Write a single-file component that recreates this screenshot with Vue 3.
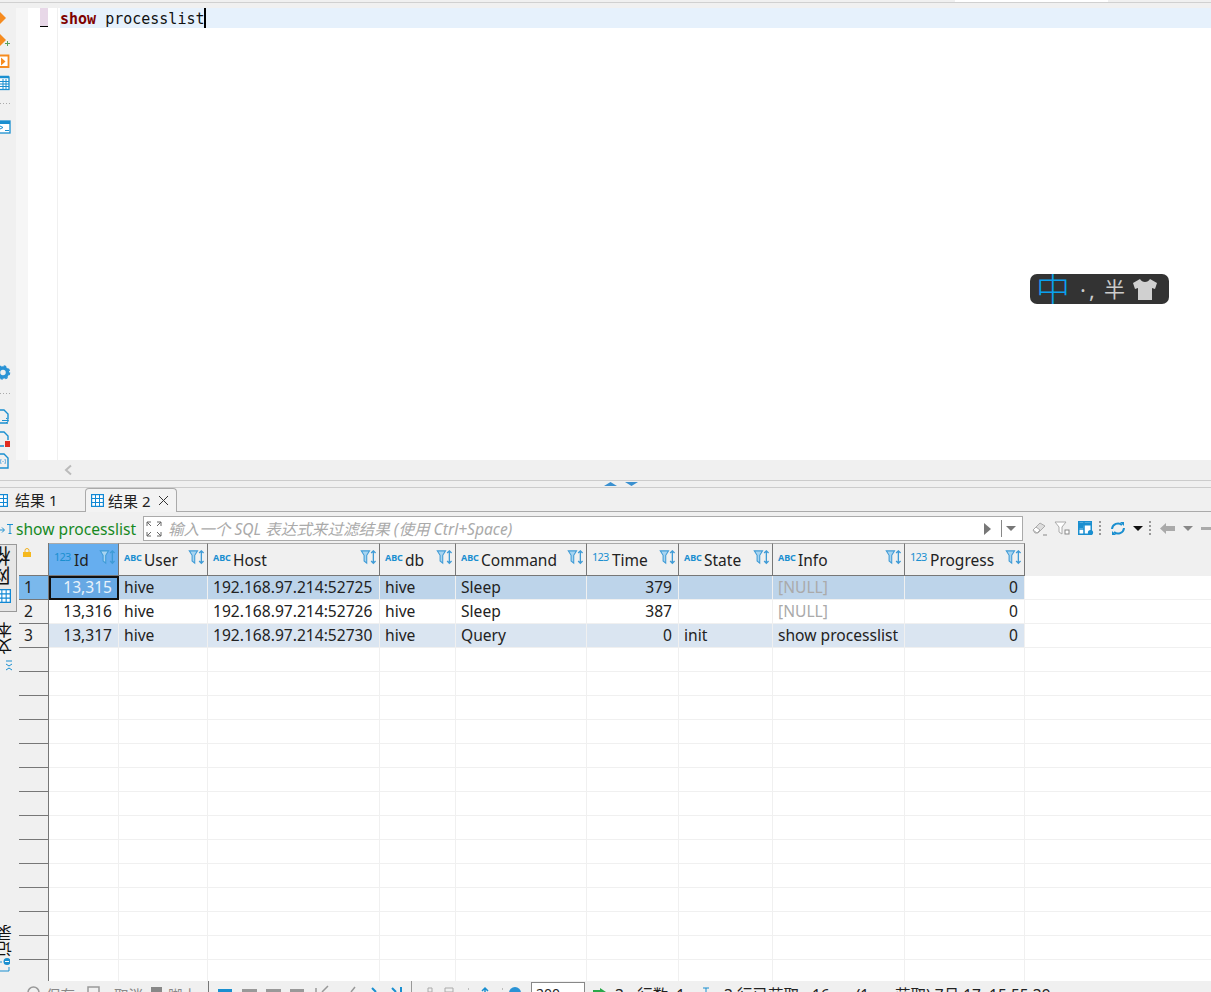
<script setup>
const columns = [
  { name: 'Id', type: '123', width: 70, right: true, selected: true },
  { name: 'User', type: 'ABC', width: 89 },
  { name: 'Host', type: 'ABC', width: 172 },
  { name: 'db', type: 'ABC', width: 76 },
  { name: 'Command', type: 'ABC', width: 131 },
  { name: 'Time', type: '123', width: 92, right: true },
  { name: 'State', type: 'ABC', width: 94 },
  { name: 'Info', type: 'ABC', width: 132 },
  { name: 'Progress', type: '123', width: 120, right: true },
]
const data = [
  ['13,315', 'hive', '192.168.97.214:52725', 'hive', 'Sleep', '379', '', '[NULL]', '0'],
  ['13,316', 'hive', '192.168.97.214:52726', 'hive', 'Sleep', '387', '', '[NULL]', '0'],
  ['13,317', 'hive', '192.168.97.214:52730', 'hive', 'Query', '0', 'init', 'show processlist', '0'],
]
const rows = Array.from({ length: 17 }, (_, i) => data[i] || Array(9).fill(''))
</script>

<template>
  <div class="app">
    <div class="topstrip"><div class="toptab"></div></div>

    <div class="editor-row">
      <svg class="rail-svg" width="16" height="477" viewBox="0 3 16 477">
        <polygon points="-1,11 6,18 -1,25" fill="#f68b1f" />
        <polygon points="-1,33 6,40 -1,47" fill="#f68b1f" />
        <path d="M5 43.500h5M7.500 41v5" stroke="#5aa05a" stroke-width="1" />
        <path d="M-2 55.500h10.500v11.500h-10.500" fill="#fff" stroke="#f68b1f" stroke-width="1.800" />
        <polygon points="1,57.500 5.500,61.500 1,65.500" fill="#f68b1f" />
        <rect x="-2" y="77" width="11" height="12.500" fill="#fff" stroke="#1a8fd0" stroke-width="1.300" />
        <path d="M-2 77h11" stroke="#1a8fd0" stroke-width="2.500" />
        <path d="M-2 81.500h11M-2 84h11M-2 86.500h11M3 79v10M6 79v10" stroke="#1a8fd0" />
        <path d="M0 103.500h1M3 103.500h1M6 103.500h1M9 103.500h1" stroke="#aaa" />
        <rect x="-2" y="121" width="12" height="12" fill="#fff" stroke="#1a8fd0" stroke-width="1.300" />
        <path d="M-2 122.500h12" stroke="#1a8fd0" stroke-width="3" />
        <path d="M0 126l3 1.500-3 1.500M5 130.500h4" stroke="#1a8fd0" fill="none" />
        <circle cx="3" cy="372.500" r="4.500" fill="none" stroke="#2a93d5" stroke-width="3.500" />
        <circle cx="3" cy="372.500" r="6.500" fill="none" stroke="#2a93d5" stroke-width="1.500" stroke-dasharray="2.500 2.600" />
        <path d="M0 393.500h1M3 393.500h1M6 393.500h1M9 393.500h1" stroke="#aaa" />
        <path d="M-2 410h6l4 4v5M-2 423h10" fill="none" stroke="#1a8fd0" stroke-width="1.400" />
        <path d="M2 420.500h6M6 418l3 2.500-3 2.500" fill="none" stroke="#1a8fd0" />
        <path d="M-2 432h6l4 4v4M-2 446h6" fill="none" stroke="#1a8fd0" stroke-width="1.400" />
        <rect x="5" y="441" width="5" height="6" fill="#e02b20" />
        <path d="M-2 454h6l4 4v10h-10" fill="none" stroke="#1a8fd0" stroke-width="1.400" />
        <path d="M1 459q-1 2.500 0 5M5 459q1 2.500 0 5M3 461v1" stroke="#5aa8dc" fill="none" />
      </svg>
      <div class="editor-wrap">
        <div class="editor-gap"></div>
        <div class="editor">
          <div class="ruler"></div>
          <div class="gutter"><div class="mark"></div></div>
          <div class="code">
            <div class="line"><b class="kw">show</b> processlist<span class="caret"></span></div>
          </div>
        </div>
        <div class="hscroll">
          <svg class="hs-left" width="10" height="12" viewBox="0 0 10 12"><path d="M8 1.500L3 6l5 4.500" fill="none" stroke="#bbb" stroke-width="2" /></svg>
        </div>
      </div>
    </div>

    <div class="splitter">
      <svg width="36" height="6" viewBox="0 0 36 6">
        <polygon points="0,5 6.500,1 13,5" fill="#3a90d0" />
        <polygon points="21,1 34,1 27.500,5" fill="#3a90d0" />
      </svg>
    </div>

    <div class="tabs">
      <div class="tab first">
        <svg class="tab-ic clip" width="13" height="13" viewBox="0 0 13 13"><use href="#tbl" /></svg>
        <span>结果 1</span>
      </div>
      <div class="tab active">
        <svg class="tab-ic" width="13" height="13" viewBox="0 0 13 13"><use href="#tbl" /></svg>
        <span>结果 2</span>
        <svg class="close" width="11" height="11" viewBox="0 0 11 11"><path d="M1 1l9 9M10 1l-9 9" stroke="#333" /></svg>
      </div>
      <div class="tab-rest"></div>
    </div>

    <div class="filter">
      <svg class="sql-ic" width="16" height="12" viewBox="0 0 16 12"><path d="M-1 7h5M2 4.500L4.500 7 2 9.500" stroke="#1a8fd0" fill="none" /><path d="M7 1.500h6M10 1.500v9M8.500 10.500h3" stroke="#1a8fd0" fill="none" /></svg>
      <span class="sql">show processlist</span>
      <div class="input">
        <svg class="expand" width="16" height="16" viewBox="0 0 16 16"><path d="M1 5V1h4M11 1h4v4M15 11v4h-4M5 15H1v-4M1 1l4 4M15 1l-4 4M15 15l-4-4M1 15l4-4" fill="none" stroke="#666" /></svg>
        <span class="ph">输入一个 SQL 表达式来过滤结果 (使用 Ctrl+Space)</span>
        <svg class="play" width="8" height="12" viewBox="0 0 8 12"><polygon points="0,0 7,6 0,12" fill="#777" /></svg>
        <div class="vsep"></div>
        <svg class="drop" width="10" height="6" viewBox="0 0 10 6"><polygon points="0,0 10,0 5,5" fill="#777" /></svg>
      </div>
      <div class="tools">
        <svg width="16" height="15" viewBox="0 0 16 15"><path d="M1 9l7-7 5 3-7 7H3z" fill="#ddd" stroke="#aaa" /><path d="M1 9l4 3 3-3-4-3z" fill="#fff" stroke="#aaa" /><path d="M11 14h4" stroke="#888" /></svg>
        <svg class="t-filter" width="16" height="15" viewBox="0 0 16 15"><path d="M1 1h11L8 6v7L5 11V6z" fill="#fff" stroke="#aaa" /><rect x="11" y="9" width="4" height="4" fill="#fff" stroke="#888" /></svg>
        <svg class="t-table" width="16" height="15" viewBox="0 0 16 15"><rect x="0.750" y="0.750" width="12.500" height="12.500" fill="#fff" stroke="#1a8fd0" stroke-width="1.500" /><path d="M0 3h14" stroke="#1a8fd0" stroke-width="3" /><path d="M0 8h6M6 0v14" stroke="#1a8fd0" stroke-width="1.500" /><rect x="1" y="4" width="4.500" height="3" fill="#1a8fd0" /><circle cx="12.500" cy="11.500" r="2.600" fill="#1a8fd0" /></svg>
        <i class="dots"></i>
        <svg class="t-sync" width="16" height="15" viewBox="0 0 16 15"><path d="M2 8a6 6 0 0 1 10-4M14 7a6 6 0 0 1-10 4" fill="none" stroke="#1a8fd0" stroke-width="2" /><path d="M10 1h4v4zM6 14H2v-4z" fill="#1a8fd0" /></svg>
        <svg class="t-caret" width="10" height="6" viewBox="0 0 10 6"><polygon points="0,0 10,0 5,5" fill="#111" /></svg>
        <i class="dots d2"></i>
        <svg class="t-back" width="15" height="11" viewBox="0 0 15 11"><path d="M6 0L0 5.500 6 11V8h9V3H6z" fill="#aaa" /></svg>
        <svg class="t-caret2" width="10" height="6" viewBox="0 0 10 6"><polygon points="0,0 10,0 5,5" fill="#888" /></svg>
        <div class="t-minus"></div>
      </div>
    </div>

    <div class="main">
      <div class="vtabs">
        <div class="vtab sel">
          <span class="vt big">网格</span>
          <svg class="vt-ic" width="14" height="14" viewBox="0 0 13 13"><use href="#tbl" /></svg>
        </div>
        <div class="vtab text">
          <span class="vt">文本</span>
          <svg class="tx-ic" width="8" height="12" viewBox="0 0 8 12"><path d="M1 1h6M1 4l3 2 3-2M1 10l3-2 3 2" fill="none" stroke="#1a8fd0" /></svg>
        </div>
        <div class="vtab rec">
          <span class="vt">记录</span>
          <svg class="rec-ic" width="16" height="14" viewBox="0 0 16 14"><path d="M0 4h8M15 9v4H0" fill="none" stroke="#1a8fd0" /><circle cx="13" cy="3.500" r="3.500" fill="#1a8fd0" /><path d="M11 3.500h4" stroke="#fff" /></svg>
        </div>
      </div>

      <div class="grid">
        <div class="hrow">
          <div class="corner">
            <svg width="8" height="9" viewBox="0 0 8 9"><path d="M2 4V2.500a2 2 0 0 1 4 0V4" fill="none" stroke="#f0b020" /><rect y="4" width="8" height="5" fill="#f5b81e" /></svg>
          </div>
          <div
            v-for="c in columns"
            :key="c.name"
            class="hcell"
            :class="{ 'h-sel': c.selected }"
            :style="{ width: c.width + 'px' }"
          >
            <span class="ty" :class="c.type === 'ABC' ? 'abc' : 'num'">{{ c.type }}</span>
            <span class="hname">{{ c.name }}</span>
            <svg class="fic" width="17" height="15" viewBox="0 0 18 17">
              <path d="M0.800 1h9.400L7 6v9l-3-2.500V6z" fill="#a8d4f0" stroke="#3f9bd6" stroke-width="1.200" />
              <path d="M14.500 1v14M12 3.500L14.500 1 17 3.500M12 12.500l2.500 2.500 2.500-2.500" fill="none" stroke="#3f9bd6" stroke-width="1.500" />
            </svg>
          </div>
          <div class="hfill"></div>
        </div>

        <div v-for="(r, i) in rows" :key="i" class="row" :class="'r' + i">
          <div class="rh" :class="{ 'rh-sel': i === 0 }">{{ i < 3 ? i + 1 : '' }}</div>
          <div
            v-for="(v, j) in r"
            :key="j"
            class="cell"
            :class="{ right: columns[j].right, nul: v === '[NULL]', cur: i === 0 && j === 0 }"
            :style="{ width: columns[j].width + 'px' }"
          >{{ v }}</div>
          <div class="rfill"></div>
        </div>
      </div>
    </div>

    <div class="status">
      <span class="st g s1"><svg width="13" height="13" viewBox="0 0 13 13"><circle cx="6.500" cy="6.500" r="5.500" fill="none" stroke="#999" stroke-width="1.500" /></svg><em>保存</em></span>
      <span class="st g s2"><svg width="13" height="13" viewBox="0 0 13 13"><rect x="1" y="1" width="11" height="11" fill="none" stroke="#999" stroke-width="1.500" /></svg><em>取消</em></span>
      <span class="st g s3"><svg width="13" height="13" viewBox="0 0 13 13"><rect x="1" y="1" width="11" height="11" fill="#888" /></svg><em>脚本</em></span>
      <i class="sbar"></i>
      <svg class="navs" width="322" height="11" viewBox="209 981 322 11">
        <path d="M218 990.500h14" stroke="#1a8fd0" stroke-width="3" />
        <path d="M242 990.500h15M266 990.500h15M290 990.500h14" stroke="#999" stroke-width="3" />
        <path d="M316 988v4M328 986l-6 6M355 987l-4 5" stroke="#999" stroke-width="1.500" fill="none" />
        <path d="M372 988l4 4M392 988l4 4M401 987v5" stroke="#1a8fd0" stroke-width="2" fill="none" />
        <path d="M411.500 981v11" stroke="#999" />
        <path d="M428 988h4v4h-4zM445 988h8v4h-8z" stroke="#aaa" fill="none" />
        <path d="M468 989h1M502 989h1" stroke="#888" />
        <path d="M485 992v-3M482 991l3-3 3 3" stroke="#1a8fd0" stroke-width="1.500" fill="none" />
        <circle cx="515" cy="993" r="6" fill="#2a93d5" />
      </svg>
      <div class="limit">200</div>
      <svg class="go" width="14" height="9" viewBox="0 0 14 9"><path d="M0 2h7V0l6 4-6 4V6H0z" fill="#2aa84a" /></svg>
      <span class="st info one">3</span>
      <span class="st info two">; 行数: 1</span>
      <svg class="ibeam" width="6" height="11" viewBox="0 0 6 11"><path d="M0 4h6M3 4v7" stroke="#1a8fd0" /></svg>
      <span class="st info three">3 行已获取 - 16ms (1ms 获取) 7月 17, 15:55:39</span>
    </div>

    <div class="ime">
      <span class="zh">中</span>
      <span class="punc">·,</span>
      <span class="half">半</span>
      <svg width="26" height="23" viewBox="0 0 26 23"><path d="M8 1L1 5l2 6 3-1v12h14V10l3 1 2-6-7-4c-1 2-3 3-5 3S9 3 8 1z" fill="#d0d0d0" /></svg>
    </div>

    <svg class="defs" width="0" height="0">
      <defs>
        <g id="tbl">
          <rect x="0.600" y="0.600" width="11.800" height="11.800" fill="#fff" stroke="#1188d4" stroke-width="1.200" />
          <path d="M0 4.500h13M0 8.500h13M4.500 1v12M8.500 1v12" stroke="#1188d4" />
        </g>
      </defs>
    </svg>
  </div>
</template>

<style scoped>
.app {
  position: relative;
  width: 1211px;
  height: 992px;
  overflow: hidden;
  background: #f0f0f0;
  display: flex;
  flex-direction: column;
  font-family: "Noto Sans", "Noto Sans CJK SC", sans-serif;
  font-size: 15.600px;
  color: #222;
}
.topstrip { height: 2px; border-bottom: 1px solid #d0d0d0; flex: none; }
.toptab { width: 153px; height: 2px; margin-left: 955px; background: #fff; }
.editor-row { display: flex; height: 477px; flex: none; }
.rail-svg { flex: none; display: block; }
.editor-wrap { flex: 1; display: flex; flex-direction: column; min-width: 0; }
.editor-gap { height: 5px; flex: none; }
.editor { height: 452px; display: flex; flex: none; background: #fff; }
.ruler { width: 12px; background: #f6f6f6; flex: none; }
.gutter { width: 30px; box-sizing: border-box; border-right: 1px solid #f0f0f0; background: #fff; flex: none; padding-left: 12px; }
.mark { width: 8px; height: 18px; background: #e8d8e8; border-bottom: 1px solid #000; }
.code { flex: 1; padding-left: 2px; }
.line {
  height: 20px;
  background: #e6f1fc;
  font-family: "DejaVu Sans Mono", monospace;
  font-size: 15px;
  line-height: 22px;
  color: #111;
  white-space: pre;
  overflow: hidden;
}
.kw { color: #7f0000; font-weight: 700; }
.caret { display: inline-block; width: 2px; height: 20px; margin-left: -1px; background: #000; vertical-align: top; }
.hscroll { height: 20px; flex: none; display: flex; align-items: center; padding-left: 47px; }
.hs-left { display: block; }
.splitter {
  height: 6px;
  flex: none;
  border-top: 1px solid #ccc;
  border-bottom: 1px solid #ccc;
  padding-left: 604px;
  box-sizing: content-box;
}
.splitter svg { display: block; }
.tabs { display: flex; height: 24px; flex: none; font-size: 15px; }
.tab { display: flex; align-items: center; box-sizing: border-box; height: 24px; }
.tab.first { width: 85px; padding-left: 15px; position: relative; border-bottom: 1px solid #aaa; }
.tab-ic { flex: none; }
.clip { position: absolute; left: -5px; top: 6px; }
.tab.active {
  width: 92px;
  padding-left: 5px;
  border: 1px solid #aaa;
  border-bottom: none;
  border-radius: 4px 4px 0 0;
  background: #f3f3f3;
}
.tab.active span { margin-left: 4px; }
.close { margin-left: 8px; }
.tab-rest { flex: 1; border-bottom: 1px solid #aaa; }
.filter { height: 29px; flex: none; display: flex; align-items: center; padding-top: 4px; box-sizing: border-box; }
.sql-ic { flex: none; }
.sql { color: #16891f; width: 126px; flex: none; white-space: nowrap; }
.input {
  width: 880px;
  height: 25px;
  flex: none;
  box-sizing: border-box;
  margin-left: 1px;
  background: #fff;
  border: 1px solid #aaa;
  display: flex;
  align-items: center;
  padding-left: 2px;
}
.expand { flex: none; }
.ph { color: #aaa; font-style: italic; margin-left: 6px; width: 816px; flex: none; white-space: nowrap; }
.play { flex: none; }
.vsep { width: 1px; height: 17px; background: #888; margin-left: 9px; flex: none; }
.drop { margin-left: 4px; flex: none; }
.tools { display: flex; align-items: center; margin-left: 9px; flex: none; }
.tools svg { flex: none; }
.t-filter { margin-left: 6px; }
.t-table { margin-left: 8px; }
.dots { width: 2px; height: 15px; margin-left: 5px; flex: none; background: repeating-linear-gradient(#999 0 2px, transparent 2px 4px); }
.t-sync { margin-left: 9px; }
.t-caret { margin-left: 7px; }
.d2 { margin-left: 6px; }
.t-back { margin-left: 9px; }
.t-caret2 { margin-left: 8px; }
.t-minus { width: 12px; height: 3px; margin-left: 8px; background: #aaa; flex: none; }
.main { flex: none; height: 440px; display: flex; overflow: hidden; }
.vtabs { width: 19px; flex: none; display: flex; flex-direction: column; }
.vtab { display: flex; flex-direction: column; align-items: center; width: 17px; box-sizing: border-box; overflow: hidden; flex: none; }
.vtab.sel { height: 68px; margin-top: 3px; background: #e6e6e6; border: 1px solid #999; border-left: none; padding-top: 1px; }
.vtab.text { margin-top: 10px; height: 52px; }
.vtab.rec { margin-top: 251px; height: 50px; }
.vt {
  writing-mode: vertical-rl;
  transform: rotate(180deg);
  font-size: 16px;
  line-height: 16px;
  margin-left: -8px;
  color: #111;
  flex: none;
}
.vt.big { font-size: 20px; line-height: 20px; margin-left: -12px; }
.vt-ic { flex: none; margin-top: 3px; margin-left: -8px; }
.tx-ic { flex: none; margin-top: 6px; }
.rec-ic { flex: none; margin-top: 1px; margin-left: -13px; }
.grid { flex: none; width: 1192px; background: #fff; display: flex; flex-direction: column; overflow: hidden; }
.hrow { display: flex; height: 35px; flex: none; background: #f0f0f0; padding-top: 2px; box-sizing: border-box; }
.corner { width: 30px; flex: none; box-sizing: border-box; border-right: 1px solid #777; border-bottom: 1px solid #777; padding: 5px 0 0 4px; }
.corner svg { display: block; }
.hcell {
  flex: none;
  box-sizing: border-box;
  position: relative;
  border-right: 1px solid #777;
  border-bottom: 1px solid #777;
  border-top: 1px solid #aaa;
  padding-left: 25px;
  line-height: 33px;
  height: 33px;
  overflow: hidden;
  font-size: 15.500px;
  white-space: nowrap;
}
.h-sel { background: #66aeef; }
.ty { position: absolute; left: 5px; line-height: 12px; color: #1a8fd0; }
.num { font-size: 11px; top: 7px; letter-spacing: -0.800px; }
.abc { font-size: 9px; font-weight: 700; top: 8px; letter-spacing: -0.100px; }
.fic { position: absolute; right: 2px; top: 6px; }
.hfill { flex: 1; }
.row { display: flex; height: 24px; flex: none; }
.rh {
  width: 30px;
  flex: none;
  box-sizing: border-box;
  background: #f0f0f0;
  border-right: 1px solid #777;
  border-bottom: 1px solid #777;
  padding-left: 5px;
  line-height: 22px;
}
.rh-sel { background: #7ab8ec; }
.cell {
  flex: none;
  box-sizing: border-box;
  border-right: 1px solid #f0f0f0;
  border-bottom: 1px solid #f0f0f0;
  padding: 0 6px 0 5px;
  line-height: 22px;
  white-space: nowrap;
  overflow: hidden;
}
.right { text-align: right; }
.nul { color: #aaa; }
.cur { background: #66a8e4; color: #e8f2fb; outline: 2px solid #111; outline-offset: -2px; }
.r0 .cell { background: #bdd4ea; }
.r0 .cell.cur { background: #66a8e4; }
.r2 .cell { background: #dae5f1; }
.rfill { flex: 1; border-bottom: 1px solid #f0f0f0; }
.status { height: 11px; flex: none; display: flex; overflow: hidden; position: relative; }
.st { position: absolute; top: 5px; display: flex; align-items: flex-start; line-height: 18px; font-size: 15.500px; white-space: nowrap; }
.st em { font-style: normal; margin-left: 6px; }
.g { color: #888; font-size: 14.500px; }
.s1 { left: 27px; }
.s2 { left: 87px; }
.s2 em { margin-left: 14px; }
.s3 { left: 150px; }
.s3 em { margin-left: 5px; }
.sbar { position: absolute; left: 208px; top: 0; width: 1px; height: 11px; background: #777; }
.navs { position: absolute; left: 209px; top: 0; }
.limit {
  position: absolute;
  left: 531px;
  top: 1px;
  width: 54px;
  height: 24px;
  box-sizing: border-box;
  background: #fff;
  border: 1px solid #888;
  padding-left: 4px;
  font-size: 14px;
  line-height: 22px;
}
.go { position: absolute; left: 593px; top: 7px; }
.ibeam { position: absolute; left: 703px; top: 3px; }
.info { color: #222; }
.one { left: 615px; }
.two { left: 629px; }
.three { left: 724px; }
.ime {
  position: absolute;
  left: 1030px;
  top: 274px;
  width: 139px;
  height: 30px;
  box-sizing: border-box;
  padding-left: 6px;
  background: #333;
  border-radius: 7px;
  display: flex;
  align-items: center;
  overflow: hidden;
}
.zh { color: #0aa0ee; font-size: 34px; line-height: 30px; width: 34px; flex: none; font-weight: 300; }
.punc { color: #ccc; font-size: 22px; margin-left: 10px; width: 24px; flex: none; line-height: 30px; letter-spacing: 3px; }
.half { color: #ccc; font-size: 21px; line-height: 30px; width: 26px; flex: none; }
.ime svg { margin-left: 2px; flex: none; }
.defs { position: absolute; }
</style>

<style>
html, body { margin: 0; overflow: hidden; background: #f0f0f0; }
</style>
